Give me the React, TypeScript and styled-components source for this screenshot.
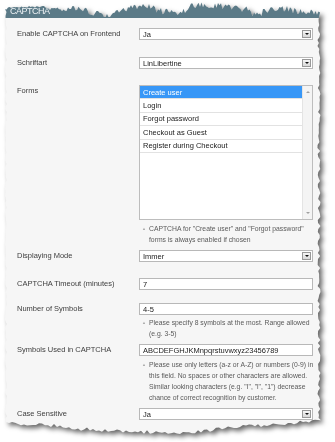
import React from 'react';
import styled, { createGlobalStyle } from 'styled-components';

const GlobalStyle = createGlobalStyle`
  html, body {
    margin: 0;
    padding: 0;
    background: #fff;
  }
  body {
    font-family: "Liberation Sans", Arial, sans-serif;
  }
`;

// torn paper outline
const PAPER_W = 316;
const PAPER_H = 440;

type Pt = [number, number];

const makeRand = (seed: number) => {
  let s = seed;
  return () => {
    s = (s * 16807) % 2147483647;
    return s / 2147483647;
  };
};

const interp = (pts: Pt[], x: number) => {
  for (let i = 0; i < pts.length - 1; i++) {
    const [x0, y0] = pts[i];
    const [x1, y1] = pts[i + 1];
    if (x >= x0 && x <= x1) return y0 + ((y1 - y0) * (x - x0)) / (x1 - x0 || 1);
  }
  return pts[pts.length - 1][1];
};

const topProfile: Pt[] = [
  [0, 10], [4, 7], [40, 6.5], [46, 10], [55, 8], [70, 7], [80, 11], [95, 14], [105, 15],
  [113, 12], [125, 8], [145, 7], [155, 11], [175, 12], [185, 7], [205, 5], [225, 6],
  [240, 9], [250, 15], [257, 13], [265, 10], [280, 9], [295, 12], [316, 13],
];

const bottomProfile: Pt[] = [
  [0, 423], [25, 424], [55, 426], [75, 429], [115, 431], [165, 433], [195, 432],
  [225, 427], [265, 425], [295, 422], [316, 421],
];

const paperClip = (() => {
  const r = makeRand(4242);
  const pts: Pt[] = [];
  for (let x = 0; x <= PAPER_W; x += 1.5) {
    const amp = x < 44 ? 1.6 : 7;
    pts.push([x, Math.min(17, Math.max(1, interp(topProfile, x) + (r() - 0.5) * amp))]);
  }
  for (let y = 16; y <= 418; y += 3) {
    pts.push([PAPER_W - 0.5 - r() * 3, y]);
  }
  for (let x = PAPER_W; x >= 0; x -= 3) {
    pts.push([x, interp(bottomProfile, x) + (r() - 0.5) * 3.5]);
  }
  for (let y = 420; y >= 12; y -= 4) {
    pts.push([r() * 1.6, y]);
  }
  return `polygon(${pts.map(([x, y]) => `${x.toFixed(1)}px ${y.toFixed(1)}px`).join(', ')})`;
})();

const Page = styled.div`
  width: 335px;
  height: 442px;
  overflow: hidden;
  background: #fff;
`;

const Shadow = styled.div`
  margin-left: 5px;
  width: ${PAPER_W}px;
  filter: drop-shadow(3px 3px 2.5px rgba(0, 0, 0, 0.6));
`;

const Paper = styled.div`
  height: ${PAPER_H}px;
  background: #f6f6f6;
  clip-path: ${paperClip};
`;

const Header = styled.div`
  height: 18px;
  box-sizing: border-box;
  padding: 0 0 2px 5px;
  display: flex;
  align-items: flex-end;
  background: #5b7a87;
  color: #eef3f5;
  font-size: 9px;
  letter-spacing: -0.5px;
`;

const Body = styled.div`
  padding: 10px 7px 0 12px;
`;

const Row = styled.div<{ $gap: number }>`
  display: grid;
  grid-template-columns: 122px 174px;
  margin-top: ${(p) => p.$gap}px;
`;

const Label = styled.div`
  font-size: 7.5px;
  line-height: 12px;
  color: #3d3d3d;
`;

const Field = styled.div`
  display: flex;
  flex-direction: column;
`;

const Box = styled.div`
  height: 12px;
  box-sizing: border-box;
  border: 1px solid #b8b8b8;
  background: #fff;
  display: flex;
  align-items: center;
  padding-left: 3px;
  font-size: 7.5px;
  color: #222;
`;

const ArrowBox = styled.span`
  margin-left: auto;
  margin-right: 1px;
  width: 9px;
  height: 8px;
  box-sizing: border-box;
  border: 1px solid #999;
  background: linear-gradient(#f6f6f6, #d9d9d9);
  display: flex;
  align-items: center;
  justify-content: center;

  &::after {
    content: '';
    border-left: 2px solid transparent;
    border-right: 2px solid transparent;
    border-top: 2px solid #111;
  }
`;

const List = styled.div`
  height: 135px;
  box-sizing: border-box;
  border: 1px solid #bdbdbd;
  background: #fff;
  display: flex;
`;

const Options = styled.div`
  flex: 1;
`;

const Option = styled.div<{ $selected?: boolean }>`
  height: 13.4px;
  box-sizing: border-box;
  padding-left: 3px;
  border-bottom: 1px solid #e2e2e2;
  display: flex;
  align-items: center;
  font-size: 7.5px;
  color: ${(p) => (p.$selected ? '#fff' : '#222')};
  background: ${(p) => (p.$selected ? '#3797f7' : '#fff')};
`;

const Scrollbar = styled.div`
  width: 9px;
  border-left: 1px solid #e4e4e4;
  background: #f4f4f4;
  display: flex;
  flex-direction: column;
  justify-content: space-between;
  align-items: center;
  padding: 5px 0;
`;

const ScrollArrow = styled.span<{ $down?: boolean }>`
  border-left: 2px solid transparent;
  border-right: 2px solid transparent;
  ${(p) => (p.$down ? 'border-top: 2px solid #a0a0a0;' : 'border-bottom: 2px solid #a0a0a0;')}
`;

const Note = styled.div<{ $gap: number }>`
  display: flex;
  gap: 3px;
  margin-top: ${(p) => p.$gap}px;
  padding-left: 3px;
  font-size: 6.8px;
  line-height: 11px;
  color: #5a5a5a;
  white-space: nowrap;
`;

const NoteIcon = styled.span`
  font-size: 4px;
  color: #a8a8a8;
`;

const NoteText = styled.div`
  display: flex;
  flex-direction: column;
`;

const Select = ({ value }: { value: string }) => (
  <Box>
    {value}
    <ArrowBox />
  </Box>
);

const Hint = ({ gap, lines }: { gap: number; lines: string[] }) => (
  <Note $gap={gap}>
    <NoteIcon>▲</NoteIcon>
    <NoteText>
      {lines.map((l) => (
        <span key={l}>{l}</span>
      ))}
    </NoteText>
  </Note>
);

const forms = ['Create user', 'Login', 'Forgot password', 'Checkout as Guest', 'Register during Checkout'];

export default function App() {
  return (
    <Page>
      <GlobalStyle />
      <Shadow>
        <Paper>
          <Header>CAPTCHA</Header>
          <Body>
            <Row $gap={0}>
              <Label>Enable CAPTCHA on Frontend</Label>
              <Select value="Ja" />
            </Row>
            <Row $gap={17}>
              <Label>Schriftart</Label>
              <Select value="LinLibertine" />
            </Row>
            <Row $gap={16}>
              <Label>Forms</Label>
              <Field>
                <List>
                  <Options>
                    {forms.map((f, i) => (
                      <Option key={f} $selected={i === 0}>
                        {f}
                      </Option>
                    ))}
                  </Options>
                  <Scrollbar>
                    <ScrollArrow />
                    <ScrollArrow $down />
                  </Scrollbar>
                </List>
                <Hint
                  gap={3}
                  lines={['CAPTCHA for "Create user" and "Forgot password"', 'forms is always enabled if chosen']}
                />
              </Field>
            </Row>
            <Row $gap={5}>
              <Label>Displaying Mode</Label>
              <Select value="Immer" />
            </Row>
            <Row $gap={16}>
              <Label>CAPTCHA Timeout (minutes)</Label>
              <Box>7</Box>
            </Row>
            <Row $gap={13}>
              <Label>Number of Symbols</Label>
              <Field>
                <Box>4-5</Box>
                <Hint gap={2} lines={['Please specify 8 symbols at the most. Range allowed', '(e.g. 3-5)']} />
              </Field>
            </Row>
            <Row $gap={5}>
              <Label>Symbols Used in CAPTCHA</Label>
              <Field>
                <Box>ABCDEFGHJKMnpqrstuvwxyz23456789</Box>
                <Hint
                  gap={3}
                  lines={[
                    'Please use only letters (a-z or A-Z) or numbers (0-9) in',
                    'this field. No spaces or other characters are allowed.',
                    'Similar looking characters (e.g. "I", "l", "1") decrease',
                    'chance of correct recognition by customer.',
                  ]}
                />
              </Field>
            </Row>
            <Row $gap={5}>
              <Label>Case Sensitive</Label>
              <Select value="Ja" />
            </Row>
          </Body>
        </Paper>
      </Shadow>
    </Page>
  );
}
